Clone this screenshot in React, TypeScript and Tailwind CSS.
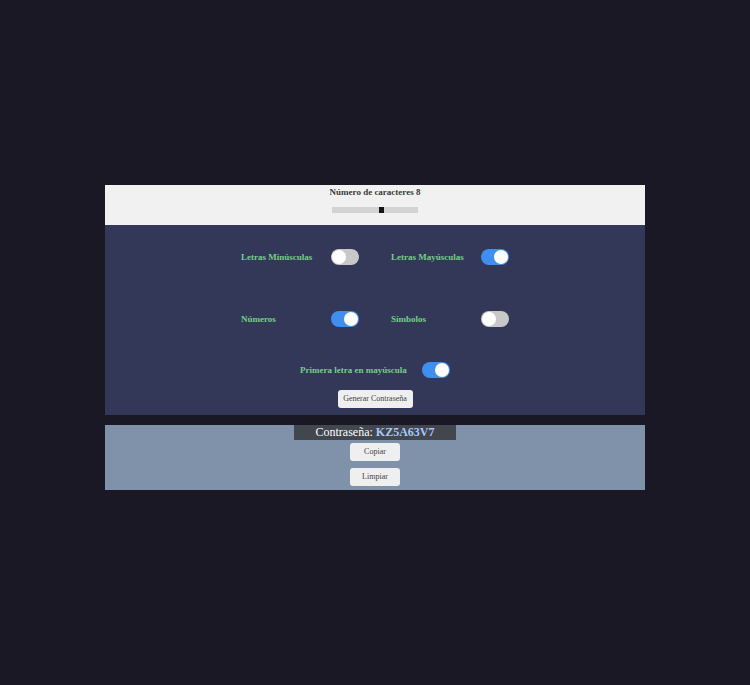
import { useState } from "react";

type SwitchProps = {
  id: string;
  label: string;
  checked: boolean;
  onChange: (value: boolean) => void;
  className?: string;
};

function Switch({ id, label, checked, onChange, className = "" }: SwitchProps) {
  return (
    <div className={`flex items-center justify-between ${className}`}>
      <label htmlFor={id} className="text-[9px] leading-4 font-bold text-[#72cf83]">
        {label}
      </label>
      <input
        id={id}
        type="checkbox"
        role="switch"
        checked={checked}
        onChange={(e) => onChange(e.target.checked)}
        className="h-4 w-7 shrink-0 cursor-pointer appearance-none rounded-full bg-[#c8c8c8] px-px py-px before:block before:size-3.5 before:rounded-full before:bg-white checked:bg-[#3f8ff0] checked:before:ml-3"
      />
    </div>
  );
}

const buttonClass =
  "h-[18px] rounded-[3px] bg-[#efefef] text-center text-[8px] leading-[18px] text-[#444444]";

const sets = {
  lower: "abcdefghijklmnopqrstuvwxyz",
  upper: "ABCDEFGHIJKLMNOPQRSTUVWXYZ",
  numbers: "0123456789",
  symbols: "!@#$%&*?",
};

export default function App() {
  const [length, setLength] = useState(8);
  const [lower, setLower] = useState(false);
  const [upper, setUpper] = useState(true);
  const [numbers, setNumbers] = useState(true);
  const [symbols, setSymbols] = useState(false);
  const [firstUpper, setFirstUpper] = useState(true);
  const [password, setPassword] = useState("KZ5A63V7");

  const generate = () => {
    const pool =
      (lower ? sets.lower : "") +
      (upper ? sets.upper : "") +
      (numbers ? sets.numbers : "") +
      (symbols ? sets.symbols : "");
    const pick = (s: string) => s.charAt(Math.floor(Math.random() * s.length));
    let result = "";
    for (let i = 0; i < length; i++) {
      result += i === 0 && firstUpper ? pick(sets.upper) : pick(pool);
    }
    setPassword(result);
  };

  return (
    <main className="flex min-h-screen flex-col items-center justify-center bg-[#1a1824] font-['Liberation_Serif',serif]">
      <div className="mb-2.5 w-[72%]">
        <section className="flex flex-col items-center bg-[#f1f1f1] pb-3">
          <label htmlFor="length" className="text-[9px] leading-[15px] font-bold text-[#3b3b3b]">
            Número de caracteres {length}
          </label>
          <input
            id="length"
            type="range"
            min={1}
            max={13}
            value={length}
            onChange={(e) => setLength(Number(e.target.value))}
            className="mt-[7px] h-1.5 w-[86px] appearance-none bg-[#d3d3d3] [&::-webkit-slider-thumb]:h-1.5 [&::-webkit-slider-thumb]:w-[5px] [&::-webkit-slider-thumb]:appearance-none [&::-webkit-slider-thumb]:bg-[#151515]"
          />
        </section>

        <section className="flex flex-col items-center bg-[#333859] pt-6 pb-[7px]">
          <div className="grid grid-cols-2 gap-x-8 gap-y-[46px]">
            <Switch id="lower" label="Letras Minúsculas" checked={lower} onChange={setLower} className="w-[118px]" />
            <Switch id="upper" label="Letras Mayúsculas" checked={upper} onChange={setUpper} className="w-[118px]" />
            <Switch id="numbers" label="Números" checked={numbers} onChange={setNumbers} className="w-[118px]" />
            <Switch id="symbols" label="Símbolos" checked={symbols} onChange={setSymbols} className="w-[118px]" />
          </div>
          <Switch
            id="first"
            label="Primera letra en mayúscula"
            checked={firstUpper}
            onChange={setFirstUpper}
            className="mt-[35px] w-[150px]"
          />
          <button type="button" onClick={generate} className={`mt-3 w-[75px] ${buttonClass}`}>
            Generar Contraseña
          </button>
        </section>

        <section className="mt-2.5 flex flex-col items-center bg-[#8092a9] pb-1">
          <p className="w-[30%] bg-[#41464f] text-center text-[12px] leading-[15px] text-white">
            Contraseña: <strong className="text-[#a9c8f5]">{password}</strong>
          </p>
          <button
            type="button"
            onClick={() => navigator.clipboard?.writeText(password)}
            className={`mt-[3px] w-[50px] ${buttonClass}`}
          >
            Copiar
          </button>
          <button type="button" onClick={() => setPassword("")} className={`mt-[7px] w-[50px] ${buttonClass}`}>
            Limpiar
          </button>
        </section>
      </div>
    </main>
  );
}
